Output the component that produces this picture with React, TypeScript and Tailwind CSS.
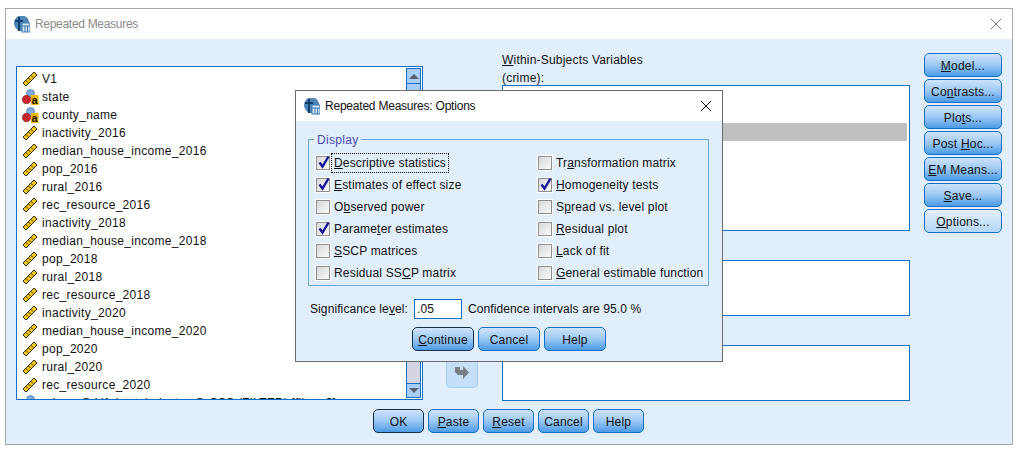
import type { ReactNode } from "react";

const variables = [
  ["V1", "scale"],
  ["state", "nominal"],
  ["county_name", "nominal"],
  ["inactivity_2016", "scale"],
  ["median_house_income_2016", "scale"],
  ["pop_2016", "scale"],
  ["rural_2016", "scale"],
  ["rec_resource_2016", "scale"],
  ["inactivity_2018", "scale"],
  ["median_house_income_2018", "scale"],
  ["pop_2018", "scale"],
  ["rural_2018", "scale"],
  ["rec_resource_2018", "scale"],
  ["inactivity_2020", "scale"],
  ["median_house_income_2020", "scale"],
  ["pop_2020", "scale"],
  ["rural_2020", "scale"],
  ["rec_resource_2020", "scale"],
];

function RulerIcon() {
  return (
    <svg width="16" height="16" viewBox="0 0 16 16" className="shrink-0">
      <path d="M1 12 L12 1 L15 4 L4 15 Z" fill="#f5c518" stroke="#2a2a1a" strokeWidth="1" />
      <path d="M4 9.5 L6 11.5 M6.5 7 L8.5 9 M9 4.5 L11 6.5" stroke="#2a2a1a" strokeWidth="1" />
    </svg>
  );
}

function NominalIcon() {
  return (
    <svg width="17" height="16" viewBox="0 0 17 16" className="shrink-0 -mr-[1px]">
      <circle cx="8.5" cy="4.5" r="4" fill="#7fabe0" stroke="#4a76b0" strokeWidth="0.7" />
      <circle cx="4.5" cy="10.5" r="4.2" fill="#c8242c" stroke="#8c1a20" strokeWidth="0.6" />
      <rect x="9" y="6" width="7.5" height="10" fill="#f5b800" />
      <text x="9.6" y="15" fontSize="11" fontWeight="700" fill="#111" fontFamily="'Liberation Sans', sans-serif">a</text>
    </svg>
  );
}

function WindowIcon() {
  return (
    <svg width="16" height="17" viewBox="0 0 16 17" className="shrink-0">
      <path d="M2 2 A7.5 7.5 0 0 1 15 5 L15 15 L6 15 A8 8 0 0 1 2 2 Z" fill="#4f86b8" />
      <path d="M5 1 L5 15 M1 5 L9 5" stroke="#123f6e" strokeWidth="2" />
      <rect x="8" y="7" width="8" height="9" fill="#d5e6f5" stroke="#3a78ad" />
      <path d="M8 10 L16 10 M11 10 L11 16 M13.5 10 L13.5 16" stroke="#3a78ad" strokeWidth="1" />
    </svg>
  );
}

function Btn({
  children,
  className,
  focus,
  light,
}: {
  children: ReactNode;
  className: string;
  focus?: boolean;
  light?: boolean;
}) {
  return (
    <button
      className={`h-[24px] pt-[1px] rounded-[5px] border text-[12px] tracking-[0.2px] text-[#111] flex items-center justify-center whitespace-nowrap ${
        focus ? "border-[#16304e]" : "border-[#0f6fc6]"
      } ${
        light
          ? "bg-gradient-to-b from-[#e4f0fc] to-[#b4d6f8]"
          : "bg-gradient-to-b from-[#cfe4fa] via-[#9cc8f3] to-[#4b9be6]"
      } ${className}`}
    >
      <span>{children}</span>
    </button>
  );
}

function Check({ label, checked }: { label: ReactNode; checked?: boolean }) {
  return (
    <div className="h-[22px] flex items-center">
      <div className="relative w-[14px] h-[14px] border border-[#8f8f8f] outline outline-1 outline-white bg-gradient-to-br from-[#d8d8d8] to-[#fbfbfb] shrink-0">
        {checked && (
          <svg width="16" height="16" viewBox="0 0 16 16" className="absolute -top-[3px] -left-[1px]">
            <path d="M3.5 8.5 L6.5 12.5 L12.5 2.5" fill="none" stroke="#15159a" strokeWidth="2.4" />
          </svg>
        )}
      </div>
      {label}
    </div>
  );
}

function CheckText({ children }: { children: ReactNode }) {
  return <span className="ml-[4px] text-[12px] tracking-[0.18px] text-[#111] whitespace-nowrap">{children}</span>;
}

function OptionsDialog() {
  return (
    <div className="absolute left-[295px] top-[90px] w-[428px] h-[272px] border border-[#6b6b6b] bg-[#e1eefb] font-['Liberation_Sans',sans-serif]">
      <div className="h-[30px] bg-white flex items-center pl-[8px] pr-[10px]">
        <WindowIcon />
        <span className="ml-[5px] text-[12px] tracking-[-0.22px] text-[#111]">Repeated Measures: Options</span>
        <svg width="12" height="12" viewBox="0 0 12 12" className="ml-auto">
          <path d="M1 1 L11 11 M11 1 L1 11" stroke="#111" strokeWidth="1" />
        </svg>
      </div>
      <div className="relative ml-[12px] mr-[13px] mt-[18px] h-[147px] border border-[#6fa6d8] pl-[7px] pt-[12px] flex">
        <span className="absolute -top-[7px] left-[5px] bg-[#e1eefb] px-[3px] text-[12px] tracking-[0.3px] leading-[14px] text-[#4a4ab0]">
          Display
        </span>
        <div className="w-[222px] flex flex-col">
          <Check
            checked
            label={
              <span className="ml-[1px] px-[2px] border border-dotted border-black">
                <span className="text-[12px] tracking-[0.15px] text-[#111] whitespace-nowrap">
                  <u>D</u>escriptive statistics
                </span>
              </span>
            }
          />
          <Check checked label={<CheckText><u>E</u>stimates of effect size</CheckText>} />
          <Check label={<CheckText>O<u>b</u>served power</CheckText>} />
          <Check checked label={<CheckText>Parame<u>t</u>er estimates</CheckText>} />
          <Check label={<CheckText><u>S</u>SCP matrices</CheckText>} />
          <Check label={<CheckText>Residual SS<u>C</u>P matrix</CheckText>} />
        </div>
        <div className="flex flex-col">
          <Check label={<CheckText>Tr<u>a</u>nsformation matrix</CheckText>} />
          <Check checked label={<CheckText><u>H</u>omogeneity tests</CheckText>} />
          <Check label={<CheckText>S<u>p</u>read vs. level plot</CheckText>} />
          <Check label={<CheckText><u>R</u>esidual plot</CheckText>} />
          <Check label={<CheckText><u>L</u>ack of fit</CheckText>} />
          <Check label={<CheckText><u>G</u>eneral estimable function</CheckText>} />
        </div>
      </div>
      <div className="mt-[12px] ml-[14px] flex items-center h-[21px] text-[12px] tracking-[0.1px] text-[#111]">
        <span>Significance le<u>v</u>el:</span>
        <div className="ml-[6px] w-[48px] h-[20px] bg-white border border-[#0f6fc6] pl-[2px] leading-[18px]">.05</div>
        <span className="ml-[6px]">Confidence intervals are 95.0 %</span>
      </div>
      <div className="mt-[8px] ml-[116px] flex gap-[4px]">
        <Btn focus className="w-[62px]"><u>C</u>ontinue</Btn>
        <Btn className="w-[62px]">Cancel</Btn>
        <Btn className="w-[62px]">Help</Btn>
      </div>
    </div>
  );
}

export default function App() {
  return (
    <div className="relative w-[1025px] h-[456px] bg-white overflow-hidden font-['Liberation_Sans',sans-serif] text-[12px] text-[#111]">
      <div className="ml-[5px] mt-[8px] w-[1008px] h-[437px] border border-[#a8a8a8] flex flex-col">
        <div className="h-[30px] bg-white flex items-center pl-[8px] pr-[10px]">
          <WindowIcon />
          <span className="ml-[5px] text-[12px] tracking-[-0.3px] text-[#8a8a8a]">Repeated Measures</span>
          <svg width="12" height="12" viewBox="0 0 12 12" className="ml-auto">
            <path d="M1 1 L11 11 M11 1 L1 11" stroke="#777" strokeWidth="1" />
          </svg>
        </div>
        <div className="flex-1 bg-[#e1eefb] flex flex-col">
          <div className="flex pl-[10px] pt-[14px]">
            <div className="mt-[13px] w-[407px] h-[334px] border border-[#0f6fc6] bg-white flex overflow-hidden">
              <div className="flex-1 pt-[3px] pl-[5px] overflow-hidden">
                {variables.map(([name, type]) => (
                  <div key={name} className="h-[18px] flex items-center gap-[4px]">
                    {type === "scale" ? <RulerIcon /> : <NominalIcon />}
                    <span className="tracking-[0.3px] whitespace-nowrap">{name}</span>
                  </div>
                ))}
                <div className="h-[18px] flex items-center gap-[4px]">
                  <NominalIcon />
                  <span className="tracking-[0.2px] whitespace-nowrap">rslope @ V1 (state) cluster @ CSS (FILTER) [filter_$]</span>
                </div>
              </div>
              <div className="w-[15px] mr-[1px] border border-[#0f6fc6] border-t-0 border-b-0 flex flex-col my-[1px]">
                <div className="h-[16px] border-y border-[#0f6fc6] bg-[#a9cff6] flex items-center justify-center">
                  <div className="w-0 h-0 border-x-[5px] border-x-transparent border-b-[5px] border-b-[#5a6470]" />
                </div>
                <div className="h-[60px] bg-gradient-to-b from-[#a9cff6] to-[#5a9fe4]" />
                <div className="flex-1 bg-[#d4d4e2]" />
                <div className="h-[15px] border-y border-[#0f6fc6] bg-[#a9cff6] flex items-center justify-center">
                  <div className="w-0 h-0 border-x-[5px] border-x-transparent border-t-[5px] border-t-[#5a6470]" />
                </div>
              </div>
            </div>
            <div className="w-[79px] flex flex-col justify-end items-start pl-[23px] pb-[13px]">
              <div className="w-[32px] h-[44px] rounded-[4px] border border-[#a9cdf0] bg-[#c6dff8] flex items-end justify-center pb-[7px]">
                <svg width="16" height="14" viewBox="0 0 16 14">
                  <path d="M1 1 L6 1 L6 4 L9 4 L9 0 L15 6.5 L9 13 L9 9 L4 9 L1 6 Z" fill="#7a7f86" />
                </svg>
              </div>
            </div>
            <div className="w-[408px] flex flex-col">
              <div className="h-[34px] -mb-[2px] flex flex-col justify-end leading-[18px] tracking-[0.2px]">
                <span><u>W</u>ithin-Subjects Variables</span>
                <span>(crime):</span>
              </div>
              <div className="h-[146px] border border-[#0f6fc6] bg-white pt-[37px] px-[2px] relative">
                <div className="h-[18px] bg-[#c0c0c0]" />
              </div>
              <div className="mt-[29px] h-[56px] border border-[#0f6fc6] bg-white" />
              <div className="mt-[29px] h-[56px] border border-[#0f6fc6] bg-white" />
            </div>
            <div className="ml-[14px] w-[78px] flex flex-col gap-[2px]">
              <Btn className="w-[78px]"><u>M</u>odel...</Btn>
              <Btn className="w-[78px]">Co<u>n</u>trasts...</Btn>
              <Btn className="w-[78px]">Plo<u>t</u>s...</Btn>
              <Btn className="w-[78px]">Post <u>H</u>oc...</Btn>
              <Btn className="w-[78px]"><u>E</u>M Means...</Btn>
              <Btn className="w-[78px]"><u>S</u>ave...</Btn>
              <Btn light className="w-[78px]"><u>O</u>ptions...</Btn>
            </div>
          </div>
          <div className="mt-[8px] pl-[367px] flex gap-[4px]">
            <Btn focus className="w-[51px]">OK</Btn>
            <Btn className="w-[51px]"><u>P</u>aste</Btn>
            <Btn className="w-[51px]"><u>R</u>eset</Btn>
            <Btn className="w-[51px]">Cancel</Btn>
            <Btn className="w-[51px]">Help</Btn>
          </div>
        </div>
      </div>
      <OptionsDialog />
    </div>
  );
}
